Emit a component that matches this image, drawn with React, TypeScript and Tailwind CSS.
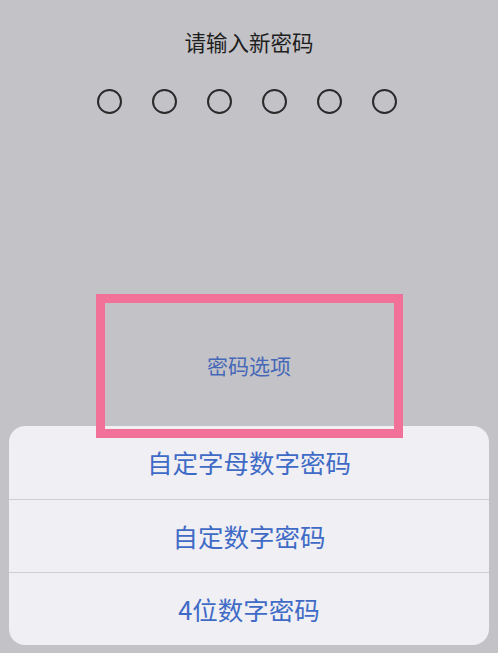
import React from 'react';

const options = ['自定字母数字密码', '自定数字密码', '4位数字密码'];

export default function App() {
  return (
    <div
      className="relative w-[498px] h-[653px] overflow-hidden bg-[#c3c2c7] flex flex-col"
      style={{ fontFamily: '"Noto Sans CJK SC", "Noto Sans", sans-serif' }}
    >
      <div className="pt-[26px] text-center text-[21.5px] leading-[32px] text-[#1e1e1e]">请输入新密码</div>

      <div className="mt-[31px] flex justify-center gap-[30px] pr-[5px]">
        {Array.from({ length: 6 }).map((_, i) => (
          <div key={i} className="w-[25px] h-[25px] rounded-full border-2 border-[#2a2a2a]" />
        ))}
      </div>

      <div className="mt-[236px] text-center text-[21px] leading-[30px] text-[#4668b8]">密码选项</div>

      <div className="mt-auto mx-[9px] mb-[8px] rounded-[16px] bg-[#efeff4] overflow-hidden">
        {options.map((label, i) => (
          <div
            key={label}
            className={`h-[73px] flex items-center justify-center text-[25.5px] text-[#3f6bc6] ${
              i > 0 ? 'border-t border-[#cfcfd3]' : ''
            }`}
          >
            {label}
          </div>
        ))}
      </div>

      <div className="absolute left-[96px] top-[294px] w-[307px] h-[144px] border-[9px] border-[#f27198]" />
    </div>
  );
}
